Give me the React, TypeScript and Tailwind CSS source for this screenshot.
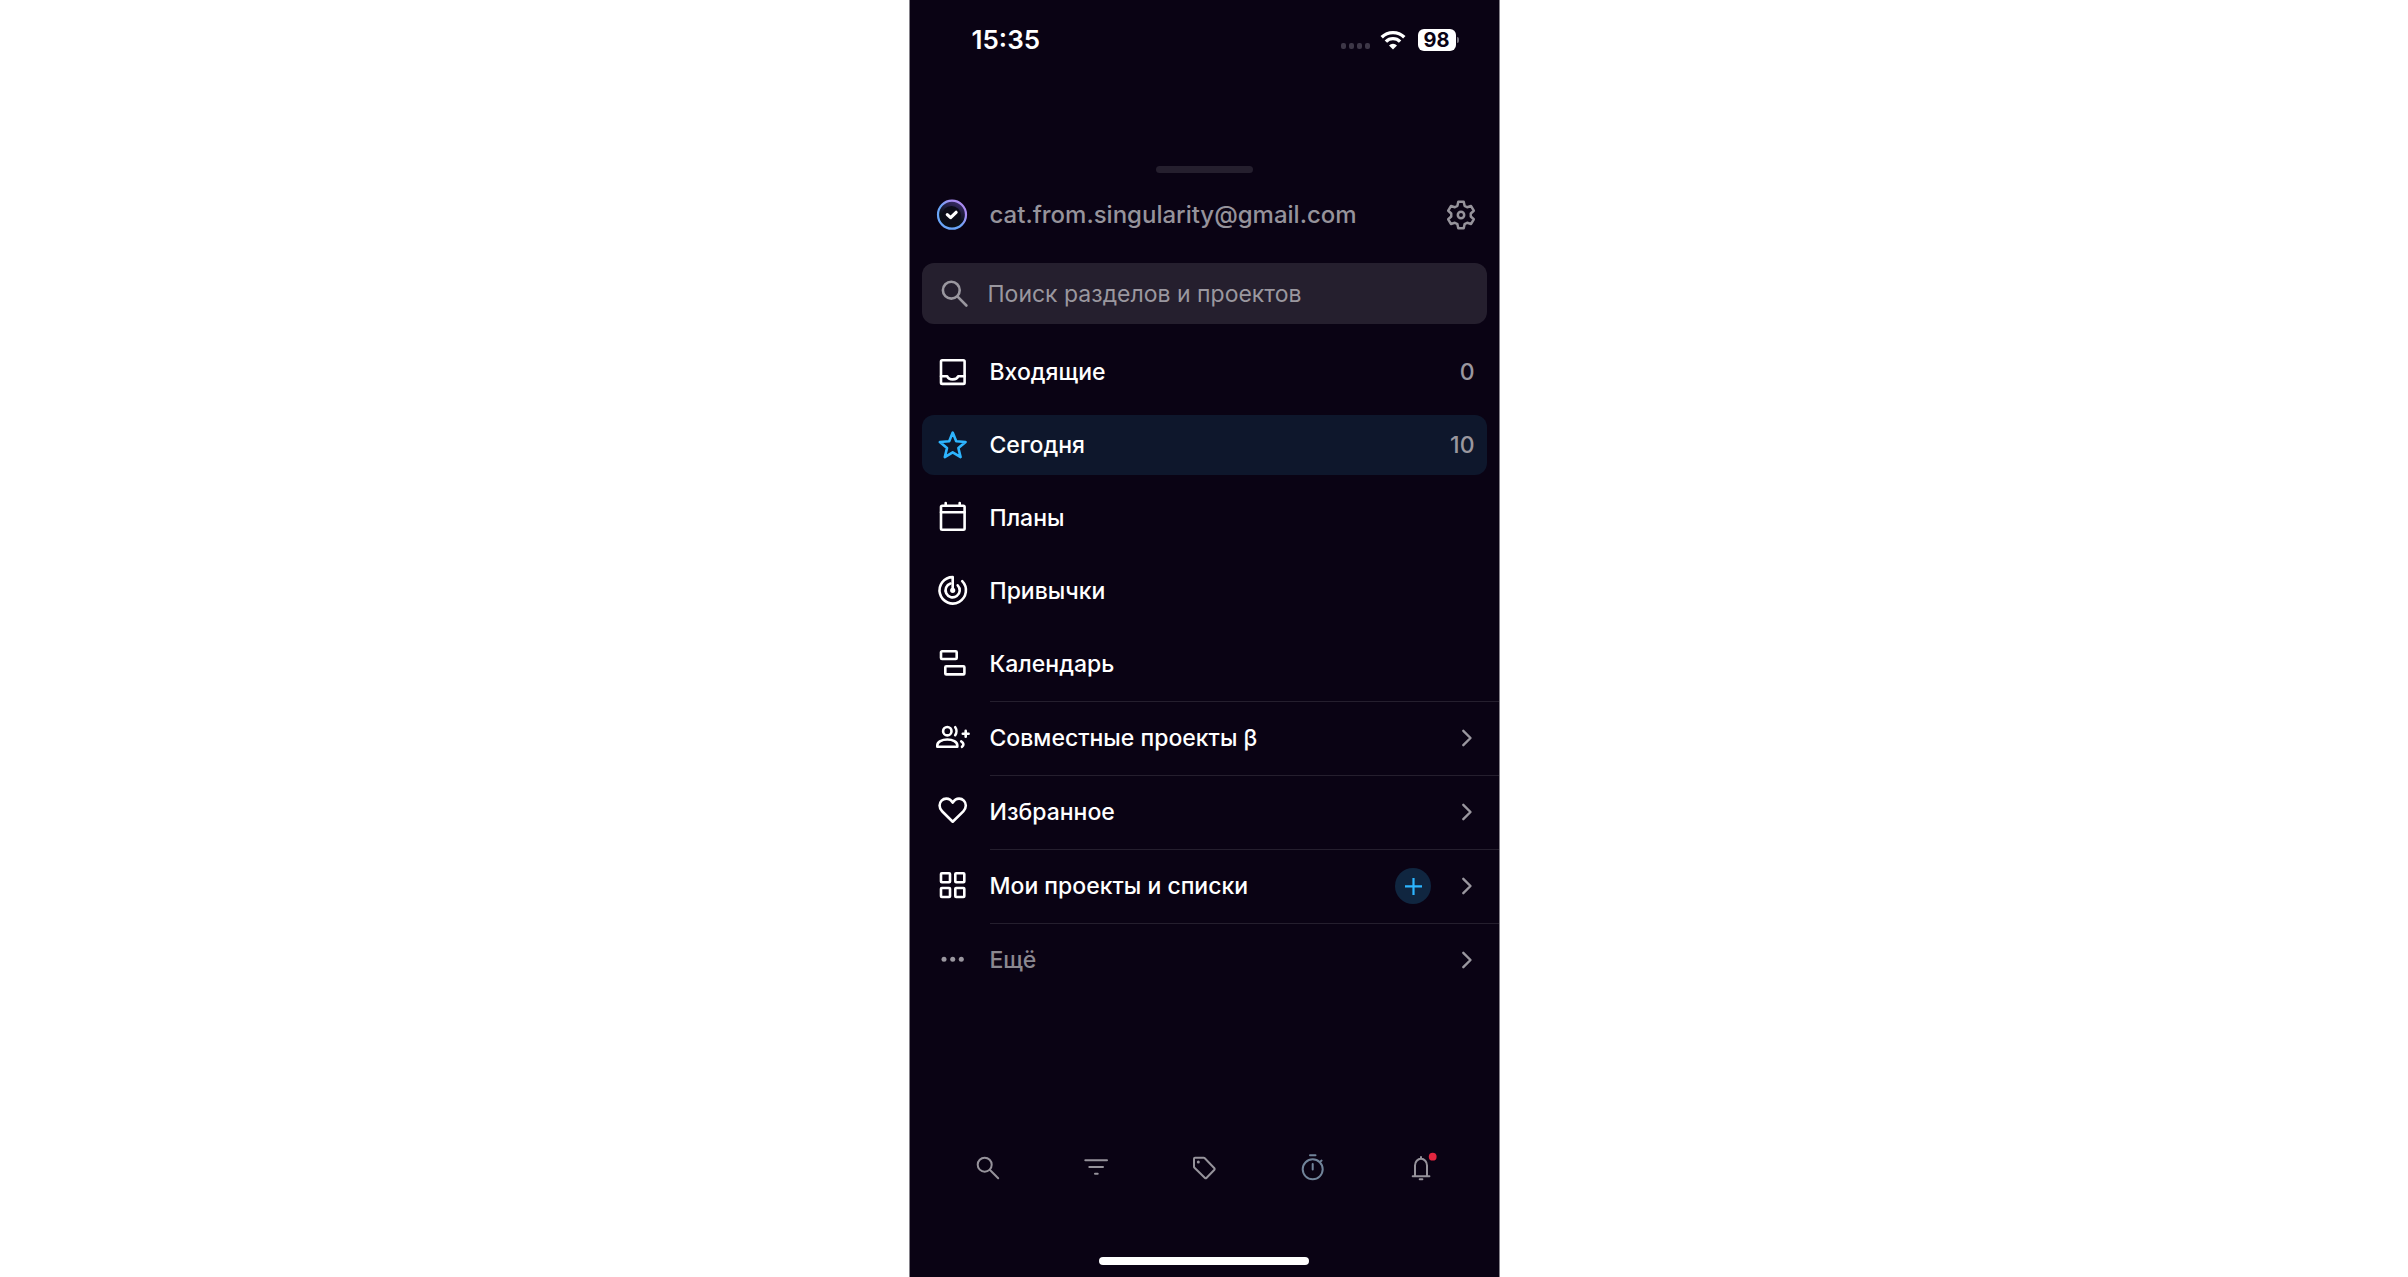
import type { ReactNode } from "react";

function Icon({ children, className = "", width = 2.6 }: { children: ReactNode; className?: string; width?: number }) {
  return (
    <svg
      viewBox="0 0 36 36"
      className={`size-9 shrink-0 ${className}`}
      fill="none"
      stroke="currentColor"
      strokeWidth={width}
      strokeLinecap="round"
      strokeLinejoin="round"
      aria-hidden="true"
    >
      {children}
    </svg>
  );
}

const InboxIcon = () => (
  <Icon>
    <rect x="7" y="6.3" width="23.6" height="23.6" rx="1.2" />
    <path d="M7 22.2h6.2c.8 2.2 2.8 3.2 5.5 3.2s4.700-1 5.500-3.200h6.400" />
  </Icon>
);

const StarIcon = () => (
  <Icon className="text-[#2db5ff]">
    <path d="M18.700 5.600 22.200 14.200 31.600 15 24.400 21.100 26.600 30.100 18.700 25.300 10.800 30.100 13 21.100 5.800 15 15.200 14.200z" />
  </Icon>
);

const CalendarIcon = () => (
  <Icon>
    <rect x="7" y="5.700" width="23.600" height="24" rx="1.200" />
    <path d="M7 12.300h23.600M11.700 3v2M25.700 3v2" />
  </Icon>
);

const HabitsIcon = () => (
  <Icon>
    <path d="M18.700 17.300V4.100A13.200 13.200 0 1 0 28.200 8.100" />
    <path d="M16.500 10.500A7.100 7.100 0 1 0 23.700 12.300" />
    <circle cx="18.700" cy="17.300" r="1.300" />
  </Icon>
);

const TimelineIcon = () => (
  <Icon>
    <rect x="7" y="5.300" width="15.700" height="7.700" rx="1" />
    <rect x="11.300" y="20.300" width="19.100" height="8.100" rx="1" />
  </Icon>
);

const PeopleIcon = () => (
  <Icon>
    <circle cx="13.300" cy="11.200" r="4.200" />
    <path d="M3.300 26.700v-1.500c0-3.300 4.600-5.700 10-5.700s10 2.400 10 5.700v1.500z" />
    <path d="M21.200 7.200c1.600 2.200 1.600 5.800 0 8M27.200 21.400c2.800 1.700 2.800 3.700.8 5.400" />
    <path d="M31.700 10.900v5.800M28.800 13.800h5.800" />
  </Icon>
);

const HeartIcon = () => (
  <Icon>
    <path d="M18.700 27.700 8.100 17.300C6.400 15.600 5.600 13.800 5.600 11.500c0-4 3-6.900 6.700-6.900 2.700 0 4.900 1.400 6.400 4.100 1.500-2.700 3.700-4.100 6.400-4.100 3.700 0 6.700 2.900 6.700 6.900 0 2.300-.8 4.100-2.500 5.800z" />
  </Icon>
);

const GridIcon = () => (
  <Icon>
    <rect x="7" y="5.300" width="9" height="9" rx=".8" />
    <rect x="21.300" y="5.300" width="9" height="9" rx=".8" />
    <rect x="7" y="20" width="9" height="9" rx=".8" />
    <rect x="21.300" y="20" width="9" height="9" rx=".8" />
  </Icon>
);

const DotsIcon = () => (
  <Icon className="text-[#9a979f]">
    <g fill="currentColor" stroke="none">
      <circle cx="10" cy="17.300" r="2.500" />
      <circle cx="18.700" cy="17.300" r="2.500" />
      <circle cx="27.300" cy="17.300" r="2.500" />
    </g>
  </Icon>
);

const gearPoints = [0, 60, 120, 180, 240, 300]
  .flatMap((deg) => {
    const a = (deg * Math.PI) / 180;
    return [
      [-3.6, -9.2],
      [-2.7, -13.2],
      [2.7, -13.2],
      [3.6, -9.2],
    ].map(([x, y]) => `${(18 + x * Math.cos(a) - y * Math.sin(a)).toFixed(2)},${(18 + x * Math.sin(a) + y * Math.cos(a)).toFixed(2)}`);
  })
  .join(" ");

const GearIcon = () => (
  <Icon width={2.5}>
    <polygon points={gearPoints} />
    <circle cx="18" cy="18" r="3.200" />
  </Icon>
);

const Avatar = () => (
  <svg viewBox="0 0 36 36" className="size-9 shrink-0" aria-hidden="true">
    <defs>
      <linearGradient id="ring" x1="0" y1="1" x2="1" y2="0">
        <stop offset=".45" stopColor="#6aa5f8" />
        <stop offset=".75" stopColor="#a98bf0" />
      </linearGradient>
      <linearGradient id="disc" x1=".3" y1="1" x2=".7" y2="0">
        <stop offset=".4" stopColor="#0a0f17" />
        <stop offset="1" stopColor="#3b2d6b" />
      </linearGradient>
    </defs>
    <circle cx="18" cy="17.700" r="14" fill="url(#disc)" stroke="url(#ring)" strokeWidth="2.200" />
    <circle cx="17.500" cy="18.500" r="9.500" fill="#0c0c18" />
    <path d="M13.300 17.600l3.300 3 5.500-5.300" fill="none" stroke="#fff" strokeWidth="3.200" strokeLinecap="round" strokeLinejoin="round" />
  </svg>
);

const Chevron = () => (
  <svg viewBox="0 0 24 24" className="size-6 shrink-0 text-[#9a979f]" fill="none" stroke="currentColor" strokeWidth="2.400" strokeLinecap="round" strokeLinejoin="round" aria-hidden="true">
    <path d="M8.300 4.800 15.500 12l-7.200 7.200" />
  </svg>
);

const views = [
  { label: "Входящие", icon: <InboxIcon />, count: 0 },
  { label: "Сегодня", icon: <StarIcon />, count: 10, active: true },
  { label: "Планы", icon: <CalendarIcon /> },
  { label: "Привычки", icon: <HabitsIcon /> },
  { label: "Календарь", icon: <TimelineIcon /> },
];

const sections = [
  { label: "Совместные проекты β", icon: <PeopleIcon /> },
  { label: "Избранное", icon: <HeartIcon /> },
  { label: "Мои проекты и списки", icon: <GridIcon />, addable: true },
  { label: "Ещё", icon: <DotsIcon />, muted: true },
];

const tools = [
  {
    label: "Поиск",
    icon: (
      <Icon width={2}>
        <circle cx="14.700" cy="14.700" r="7" />
        <path d="M20 20l8.200 8.200" />
      </Icon>
    ),
  },
  {
    label: "Фильтры",
    icon: (
      <Icon width={2}>
        <path d="M7.300 10.200h21.700M11.300 17h13.700M17 23.800h2.700" />
      </Icon>
    ),
  },
  {
    label: "Теги",
    icon: (
      <Icon width={2}>
        <path d="M8 8.700c0-.6.400-1 1-1h8.700c.5 0 .8.200 1.100.5l9.600 10c.4.500.4 1.100 0 1.600l-8 8.200c-.4.400-1 .4-1.400 0L8.500 17.700c-.3-.3-.5-.6-.5-1z" />
        <circle cx="12.300" cy="12" r="1.500" fill="currentColor" stroke="none" />
      </Icon>
    ),
  },
  {
    label: "Таймер",
    icon: (
      <Icon width={2} className="text-[#71849a]">
        <circle cx="18.700" cy="19.300" r="10" />
        <path d="M16 5.300h5.500M18.700 14v5.500M26 12l1.600-1.400" />
      </Icon>
    ),
  },
  {
    label: "Уведомления",
    icon: (
      <Icon width={2}>
        <path d="M10.700 26.200h16.700M13 26v-10.500a6 6.700 0 0 1 12 0V26M19 7v1.500" />
        <path d="M17.700 29.200h2.700" />
        <circle cx="30.700" cy="6.700" r="3.900" fill="#e2263f" stroke="none" />
      </Icon>
    ),
  },
];

function StatusBar() {
  return (
    <header className="flex h-20 items-center justify-between pr-10 pl-[62px]">
      <time className="text-[26px] font-semibold">15:35</time>
      <div className="flex items-center">
        <div className="mt-3 mr-2.5 flex gap-[3px]">
          {[0, 1, 2, 3].map((n) => (
            <span key={n} className="h-1.5 w-[5px] rounded-xs bg-[#3d3747]" />
          ))}
        </div>
        <svg viewBox="0 0 26 20" className="mr-3 h-5 w-[26px]" aria-label="Wi-Fi">
          <g fill="none" stroke="#fff" strokeWidth="3.400">
            <path d="M1.700 7.300a16 16 0 0 1 22.600 0" />
            <path d="M5.900 11.600a10 10 0 0 1 14.200 0" />
          </g>
          <path d="M13 19.500l-4-4.100a5.700 5.700 0 0 1 8 0z" fill="#fff" />
        </svg>
        <span className="flex h-[22px] w-[38px] items-center justify-center rounded-md bg-white text-[20px] font-bold text-[#0a0314]">98</span>
        <span className="ml-px h-1.5 w-0.5 rounded-r-full bg-[#77737e]" />
      </div>
    </header>
  );
}

export default function App() {
  return (
    <div className="min-h-screen bg-white font-['Inter','Noto_Sans',sans-serif]">
      <main className="mx-auto flex min-h-screen max-w-[591px] flex-col border-x border-[#85828a] bg-[#0a0314] text-[23px] leading-8 font-medium text-white">
        <StatusBar />
        <div className="mx-auto mt-[86px] h-[7px] w-[97px] rounded-full bg-[#251f2e]" />

        <div className="mt-3 flex h-[60px] items-center justify-between pr-5 pl-6 text-2xl text-[#96939b]">
          <button type="button" className="flex items-center gap-5">
            <Avatar />
            cat.from.singularity@gmail.com
          </button>
          <button type="button" aria-label="Настройки">
            <GearIcon />
          </button>
        </div>

        <label className="mx-3 mt-[18px] flex h-[61px] items-center gap-[18px] rounded-xl bg-[#251f2e] px-3 text-[#9a979f]">
          <Icon>
            <circle cx="17.300" cy="14.200" r="8.400" />
            <path d="M23.600 20.600l8.800 8.900" />
          </Icon>
          <input
            type="search"
            aria-label="Поиск разделов и проектов"
            placeholder="Поиск разделов и проектов"
            className="min-w-0 flex-1 bg-transparent font-normal outline-none placeholder:text-[#9a979f]"
          />
        </label>

        <nav className="mt-[18px]">
          <ul className="mx-3 flex flex-col gap-[13px]">
            {views.map((v) => (
              <li key={v.label}>
                <a href="#" className={`flex h-[60px] items-center gap-5 rounded-xl px-3 ${v.active ? "bg-[#0e172c]" : ""}`}>
                  {v.icon}
                  <span className="flex-1">{v.label}</span>
                  {v.count !== undefined && <span className="text-[#9a979f]">{v.count}</span>}
                </a>
              </li>
            ))}
          </ul>
          <ul className="mt-[7px]">
            {sections.map((s) => (
              <li key={s.label} className="flex items-center gap-5 pl-6">
                {s.icon}
                <div className="flex h-[74px] flex-1 items-center gap-6 border-t border-[#251f2e] pr-5 pb-0.5">
                  <a href="#" className={`flex-1 ${s.muted ? "text-[#8b8890]" : ""}`}>
                    {s.label}
                  </a>
                  {s.addable && (
                    <button type="button" aria-label="Добавить проект" className="flex size-9 items-center justify-center rounded-full bg-[#102640]">
                      <svg viewBox="0 0 36 36" className="size-9" stroke="#2db5ff" strokeWidth="2.200" aria-hidden="true">
                        <path d="M18.500 10v17M10 18.300h17" />
                      </svg>
                    </button>
                  )}
                  <Chevron />
                </div>
              </li>
            ))}
          </ul>
        </nav>

        <footer className="mt-auto pb-3">
          <div className="mb-[71px] grid grid-cols-5 px-6 text-[#96939b]">
            {tools.map((t) => (
              <button key={t.label} type="button" aria-label={t.label} className="flex justify-center">
                {t.icon}
              </button>
            ))}
          </div>
          <div className="mx-auto h-2 w-[210px] rounded-full bg-white" />
        </footer>
      </main>
    </div>
  );
}
